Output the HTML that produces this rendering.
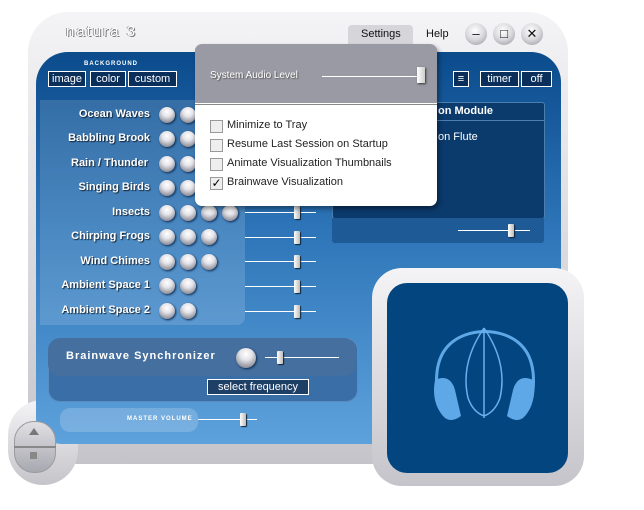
<!DOCTYPE html><html><head><style>
body{margin:0;width:644px;height:510px;background:#fff;position:relative;overflow:hidden;font-family:"Liberation Sans",sans-serif}
.a{position:absolute}
.silver{background:linear-gradient(#f4f4f6,#dcdce0 50%,#c4c4ca);}
.lbl{position:absolute;right:494px;color:#fff;font-weight:bold;font-size:11px;text-shadow:1px 1px 1px #123;white-space:nowrap}
.ball{position:absolute;width:16px;height:16px;border-radius:50%;background:radial-gradient(circle at 50% 30%,#fff 0,#e4e4ea 35%,#a0a0aa 70%,#6a6a78);box-shadow:1px 1px 2px #0a2a50}
.line{position:absolute;height:1px;background:#fff;width:71px;left:245px}
.knob{position:absolute;width:6px;height:13px;background:linear-gradient(90deg,#fff,#bbb);border-radius:1px;box-shadow:1px 1px 1px #123}
.btn{position:absolute;border:1px solid #fff;color:#fff;font-size:11px;text-align:center;height:14px;line-height:14px;background:#0a2f5a}
.cb{position:absolute;left:210px;width:11px;height:11px;border:1px solid #999;background:#eee}
.mt{position:absolute;left:227px;font-size:11px;color:#222}
.circ{position:absolute;top:23px;width:22px;height:22px;border-radius:50%;background:radial-gradient(circle at 45% 35%,#fff,#d8d8dc 50%,#8e8e96);text-align:center;font-size:13px;line-height:22px;color:#111}
</style></head><body>
<div class="a silver" style="left:28px;top:12px;width:540px;height:452px;border-radius:40px 40px 30px 30px"></div>
<div class="a silver" style="left:8px;top:400px;width:70px;height:85px;border-radius:35px"></div>
<div class="a" style="left:36px;top:52px;width:525px;height:392px;border-radius:32px 30px 26px 26px;background:linear-gradient(#0b4b8c,#2d75b8 45%,#5ea2dc)"></div>
<div class="a silver" style="left:372px;top:268px;width:212px;height:218px;border-radius:30px"></div>
<div class="a" style="left:387px;top:283px;width:181px;height:190px;border-radius:20px;background:#03457f"></div>
<svg class="a" style="left:425px;top:318px" width="120" height="120" viewBox="0 0 120 120">
<path d="M13 80 Q5 30 40 17 Q60 10 80 17 Q115 30 107 80" fill="none" stroke="#5fa8e8" stroke-width="3"/>
<path d="M59 10 L59 100 M59 10 Q35 45 43 80 Q48 94 59 98 Q70 94 75 80 Q83 45 59 10" fill="none" stroke="#6ab0ee" stroke-width="1.5"/>
<path d="M10 62 Q25 55 30 72 L36 98 Q25 106 18 98 Q6 84 10 62Z" fill="#5fa8e8"/>
<path d="M108 62 Q93 55 88 72 L82 98 Q93 106 100 98 Q112 84 108 62Z" fill="#5fa8e8"/>
</svg>
<div class="a" style="left:14px;top:421px;width:40px;height:50px;border-radius:20px;background:linear-gradient(#e0e0e4,#a8a8b0);border:1px solid #9a9aa0"></div>
<div class="a" style="left:14px;top:446px;width:42px;height:2px;background:#888"></div>
<div class="a" style="left:29px;top:428px;width:0;height:0;border-left:5px solid transparent;border-right:5px solid transparent;border-bottom:7px solid #777"></div>
<div class="a" style="left:30px;top:452px;width:7px;height:7px;background:#888"></div>
<div class="a" style="left:66px;top:23px;font-size:15px;color:#fff;letter-spacing:2px;text-shadow:1px 1px 0 #777,-1px 0 0 #999">natura 3</div>
<div class="a" style="left:348px;top:25px;width:65px;height:19px;background:#d5d5da;border-radius:4px 4px 0 0"></div>
<div class="a" style="left:361px;top:28px;font-size:11px;color:#111">Settings</div>
<div class="a" style="left:426px;top:28px;font-size:11px;color:#111">Help</div>
<div class="circ" style="left:465px">–</div><div class="circ" style="left:493px">□</div><div class="circ" style="left:521px">✕</div>
<div class="a" style="left:84px;top:61px;font-size:6px;color:#fff;letter-spacing:1px;font-weight:bold">BACKGROUND</div>
<div class="btn" style="left:48px;top:71px;width:36px">image</div>
<div class="btn" style="left:90px;top:71px;width:34px">color</div>
<div class="btn" style="left:128px;top:71px;width:47px">custom</div>
<div class="btn" style="left:453px;top:71px;width:14px">≡</div>
<div class="btn" style="left:480px;top:71px;width:37px">timer</div>
<div class="btn" style="left:521px;top:71px;width:29px">off</div>
<div class="a" style="left:40px;top:100px;width:205px;height:225px;border-radius:0 0 8px 0;background:rgba(255,255,255,.14)"></div>
<div class="lbl" style="top:108px">Ocean Waves</div>
<div class="lbl" style="top:132px">Babbling Brook</div>
<div class="lbl" style="top:157px;right:496px">Rain / Thunder</div>
<div class="lbl" style="top:181px">Singing Birds</div>
<div class="lbl" style="top:206px">Insects</div>
<div class="lbl" style="top:230px">Chirping Frogs</div>
<div class="lbl" style="top:255px">Wind Chimes</div>
<div class="lbl" style="top:279px">Ambient Space 1</div>
<div class="lbl" style="top:304px">Ambient Space 2</div>
<div class="ball" style="left:159px;top:107px"></div><div class="ball" style="left:180px;top:107px"></div>
<div class="ball" style="left:159px;top:131px"></div><div class="ball" style="left:180px;top:131px"></div>
<div class="ball" style="left:159px;top:156px"></div><div class="ball" style="left:180px;top:156px"></div>
<div class="ball" style="left:159px;top:180px"></div><div class="ball" style="left:180px;top:180px"></div>
<div class="ball" style="left:159px;top:205px"></div><div class="ball" style="left:180px;top:205px"></div><div class="ball" style="left:201px;top:205px"></div><div class="ball" style="left:222px;top:205px"></div>
<div class="ball" style="left:159px;top:229px"></div><div class="ball" style="left:180px;top:229px"></div><div class="ball" style="left:201px;top:229px"></div>
<div class="ball" style="left:159px;top:254px"></div><div class="ball" style="left:180px;top:254px"></div><div class="ball" style="left:201px;top:254px"></div>
<div class="ball" style="left:159px;top:278px"></div><div class="ball" style="left:180px;top:278px"></div>
<div class="ball" style="left:159px;top:303px"></div><div class="ball" style="left:180px;top:303px"></div>
<div class="line" style="top:212px"></div><div class="knob" style="left:294px;top:206px"></div>
<div class="line" style="top:237px"></div><div class="knob" style="left:294px;top:231px"></div>
<div class="line" style="top:261px"></div><div class="knob" style="left:294px;top:255px"></div>
<div class="line" style="top:286px"></div><div class="knob" style="left:294px;top:280px"></div>
<div class="line" style="top:311px"></div><div class="knob" style="left:294px;top:305px"></div>
<div class="a" style="left:332px;top:102px;width:211px;height:115px;border:1px solid #4d7fae;background:#0b3a6d;border-radius:3px"></div>
<div class="a" style="left:332px;top:120px;width:212px;height:1px;background:#4d7fae"></div>
<div class="a" style="left:332px;top:218px;width:212px;height:25px;background:#1d5a96;border-radius:0 0 3px 3px"></div>
<div class="a" style="left:438px;top:105px;font-size:11px;font-weight:bold;color:#fff">on Module</div>
<div class="a" style="left:438px;top:131px;font-size:11px;color:#fff">on Flute</div>
<div class="a" style="left:458px;top:230px;width:72px;height:1px;background:#fff"></div><div class="knob" style="left:508px;top:224px"></div>
<div class="a" style="left:48px;top:338px;width:308px;height:62px;border-radius:12px;background:#3a6ea6;border:1px solid #5a8cc0"></div>
<div class="a" style="left:48px;top:338px;width:308px;height:38px;border-radius:12px;background:#456f9e"></div>
<div class="a" style="left:66px;top:350px;font-size:11px;font-weight:bold;color:#fff;letter-spacing:1px">Brainwave Synchronizer</div>
<div class="ball" style="left:236px;top:348px;width:20px;height:20px"></div>
<div class="a" style="left:265px;top:357px;width:74px;height:1px;background:#fff"></div><div class="knob" style="left:277px;top:351px"></div>
<div class="btn" style="left:207px;top:379px;width:100px;background:#1e3f66">select frequency</div>
<div class="a" style="left:60px;top:408px;width:138px;height:24px;border-radius:10px;background:rgba(255,255,255,.18)"></div>
<div class="a" style="left:127px;top:416px;font-size:6px;color:#fff;letter-spacing:1px;font-weight:bold">MASTER VOLUME</div>
<div class="a" style="left:198px;top:419px;width:59px;height:1px;background:#fff"></div><div class="knob" style="left:240px;top:413px"></div>
<div class="a" style="left:195px;top:44px;width:242px;height:162px;border-radius:7px;background:#fff;box-shadow:2px 3px 5px rgba(0,0,0,.4);overflow:hidden">
<div style="height:59px;background:#9a9aa4;border-bottom:1px solid #fff;box-shadow:0 1px 0 #888"></div></div>
<div class="a" style="left:210px;top:70px;font-size:10px;color:#fff;text-shadow:1px 1px 1px #555">System Audio Level</div>
<div class="a" style="left:322px;top:76px;width:102px;height:1px;background:#fff"></div>
<div class="a" style="left:417px;top:67px;width:8px;height:16px;background:linear-gradient(90deg,#fff,#ccc);box-shadow:1px 1px 2px #333"></div>
<div class="cb" style="top:120px"></div><div class="mt" style="top:119px">Minimize to Tray</div>
<div class="cb" style="top:139px"></div><div class="mt" style="top:138px">Resume Last Session on Startup</div>
<div class="cb" style="top:158px"></div><div class="mt" style="top:157px">Animate Visualization Thumbnails</div>
<div class="cb" style="top:177px;font-size:12px;line-height:11px;text-align:center">✓</div><div class="mt" style="top:176px">Brainwave Visualization</div>
</body></html>
